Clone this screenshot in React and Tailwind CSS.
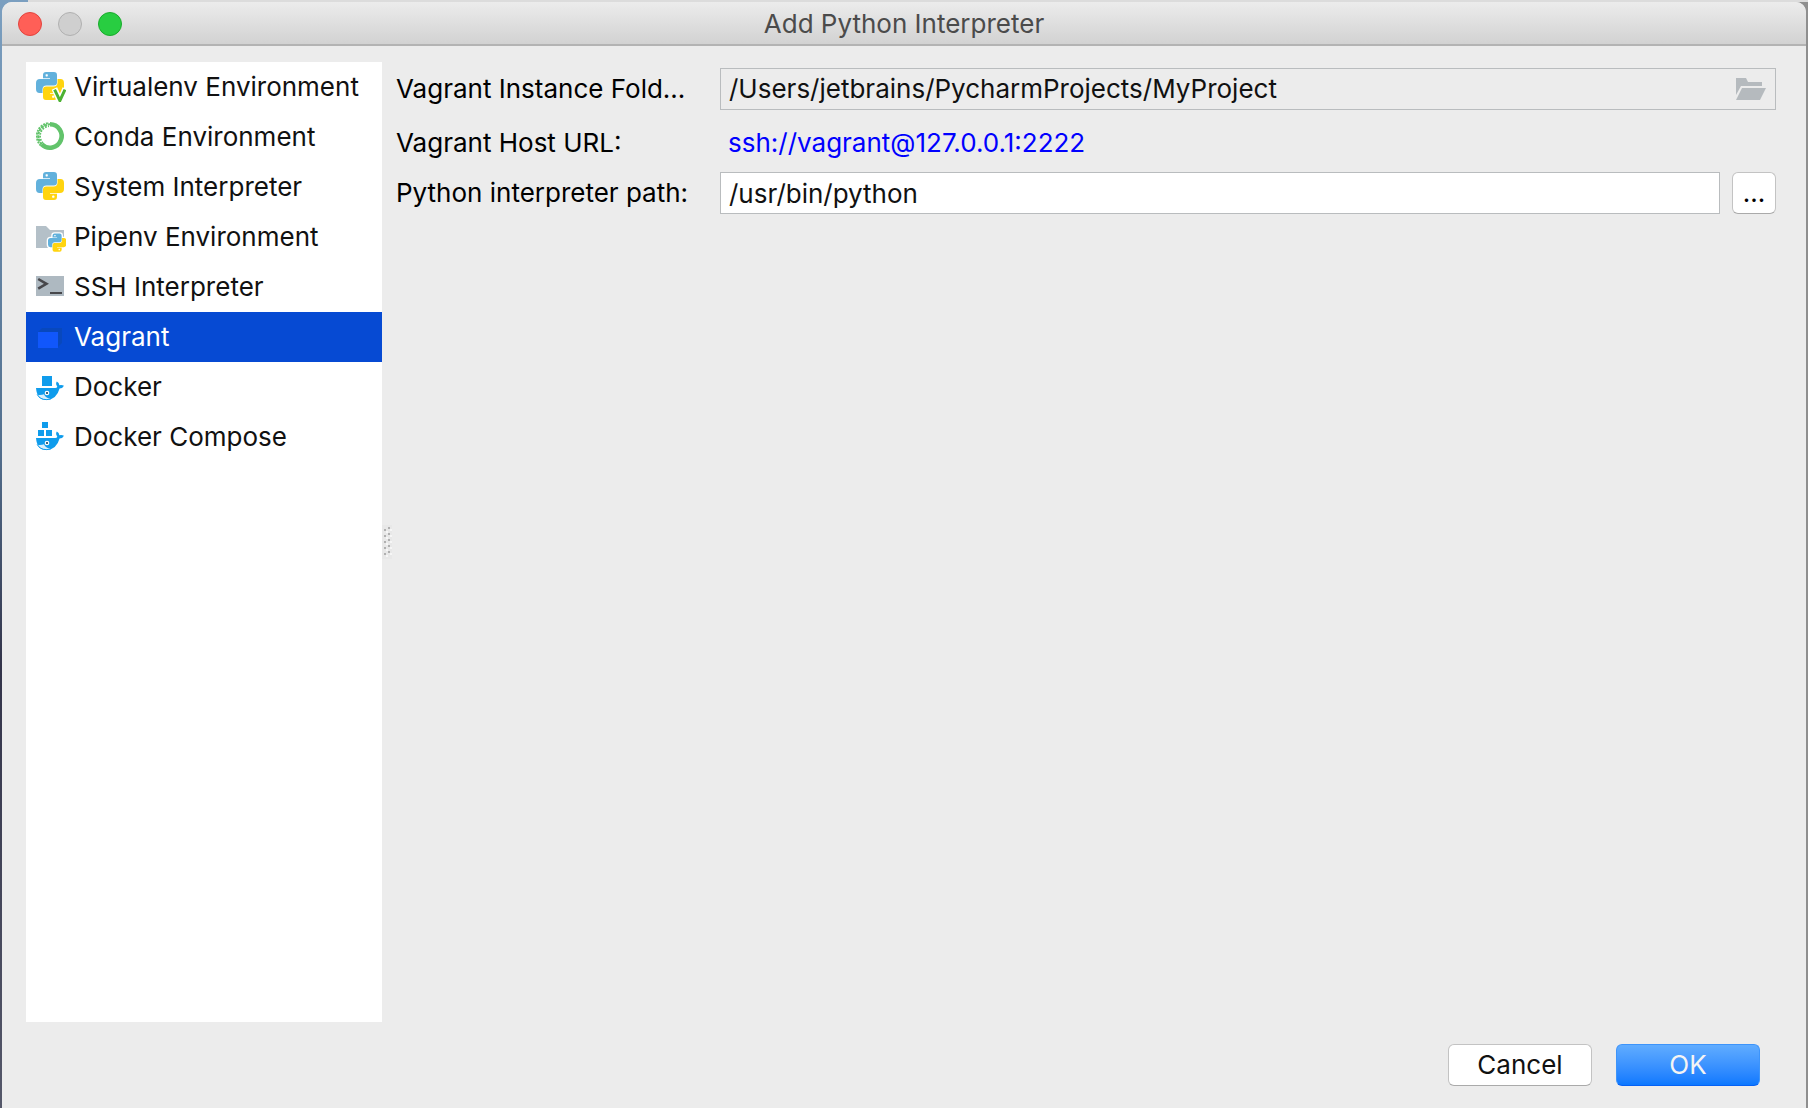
import React, { useState } from "react";

const SNAKE =
  "M10 0H18Q21 0 21 3V10.5Q21 13.5 18 13.5H10.5Q6.5 13.5 6.5 17.5V21H3.5Q0 21 0 17V11Q0 7 4 7H14V6.2H7V3Q7 0 10 0Z";

function Python({ transform }) {
  return (
    <g transform={transform}>
      <path d={SNAKE} fill="#62b1dc" />
      <rect x="9.6" y="2.2" width="2.2" height="2.2" rx="0.6" fill="#fff" />
      <g transform="rotate(180 14 14)">
        <path d={SNAKE} fill="#ffd40f" />
        <rect x="9.6" y="2.2" width="2.2" height="2.2" rx="0.6" fill="#fff" />
      </g>
    </g>
  );
}

function Icon({ children }) {
  return (
    <svg viewBox="0 0 30 30" className="size-[30px] shrink-0" aria-hidden="true">
      {children}
    </svg>
  );
}

function VirtualenvIcon() {
  return (
    <Icon>
      <Python />
      <path d="M18.4 16.5L23.9 29L29.4 16.5" fill="none" stroke="#fff" strokeWidth="6" />
      <path d="M18.6 17.6L23.9 28.6L29 17.6" fill="none" stroke="#4db233" strokeWidth="3" />
    </Icon>
  );
}

function CondaIcon() {
  return (
    <Icon>
      <path d="M14 2.3A11.7 11.7 0 1 1 5.8 22.4" fill="none" stroke="#62c36b" strokeWidth="4.6" />
      <path d="M5.8 22.4A11.7 11.7 0 0 1 14 2.3" fill="none" stroke="#62c36b" strokeWidth="2" strokeDasharray="2.8 0.8" />
      <path d="M4.8 23.6A13.2 13.2 0 0 1 13 0.9" fill="none" stroke="#62c36b" strokeWidth="1.8" strokeDasharray="2 1" />
      <path d="M7 21A9.9 9.9 0 0 1 13 4.1" fill="none" stroke="#62c36b" strokeWidth="1.8" strokeDasharray="1.8 1.2" />
    </Icon>
  );
}

function SystemIcon() {
  return (
    <Icon>
      <Python />
    </Icon>
  );
}

function PipenvIcon() {
  return (
    <Icon>
      <path d="M0 4H10L14 8H28V26H0Z" fill="#b4c0c8" />
      <g transform="translate(12 11.5) scale(.65)">
        <path d={SNAKE} fill="#fff" stroke="#fff" strokeWidth="4" />
        <path d={SNAKE} fill="#fff" stroke="#fff" strokeWidth="4" transform="rotate(180 14 14)" />
      </g>
      <Python transform="translate(12 11.5) scale(.65)" />
    </Icon>
  );
}

function SshIcon() {
  return (
    <Icon>
      <rect y="4" width="28" height="20" fill="#aeb9c1" />
      <path d="M2.2 7L10.4 11.8L2.2 16.6" fill="none" stroke="#47474b" strokeWidth="2.6" />
      <rect x="14" y="20" width="12" height="2" fill="#47474b" />
    </Icon>
  );
}

function VagrantIcon() {
  return (
    <Icon>
      <path d="M2 10L6 6H26V21L22 25Z" fill="#0848bd" />
      <rect x="2" y="10" width="20" height="16" fill="#1157fb" />
    </Icon>
  );
}

function Whale() {
  return (
    <>
      <path
        d="M0 16H19.2Q21 16 21.3 14.4Q19.2 12.4 20.8 9.6Q23.2 11 23.4 13.2Q26 12.6 28 13.8Q26.8 16.4 23.6 16.6Q20.4 28 10.4 28Q1 28 0 16Z"
        fill="#0f9cec"
      />
      <path d="M1.6 22.8Q5.2 23.4 8 22.2Q9.6 25.8 14.4 26.8Q12.6 27.6 9.6 27.4Q4.2 27 1.6 22.8Z" fill="#d9effb" />
      <path d="M1.2 22.4Q3.6 27.6 10.4 27.6Q13 27.6 15 26.8" fill="none" stroke="#0f9cec" strokeWidth="1" />
      <circle cx="11" cy="21" r="2.3" fill="#fff" />
      <circle cx="11" cy="21" r="1.1" fill="#17425c" />
    </>
  );
}

function DockerIcon() {
  return (
    <Icon>
      <rect x="6" y="4" width="10" height="10" fill="#0f9cec" />
      <Whale />
    </Icon>
  );
}

function ComposeIcon() {
  return (
    <Icon>
      <path d="M6 0h6v6H6zM2 8h6v6H2zM10 8h6v6h-6z" fill="#0f9cec" />
      <Whale />
    </Icon>
  );
}

const INTERPRETERS = [
  { name: "Virtualenv Environment", Glyph: VirtualenvIcon },
  { name: "Conda Environment", Glyph: CondaIcon },
  { name: "System Interpreter", Glyph: SystemIcon },
  { name: "Pipenv Environment", Glyph: PipenvIcon },
  { name: "SSH Interpreter", Glyph: SshIcon },
  { name: "Vagrant", Glyph: VagrantIcon },
  { name: "Docker", Glyph: DockerIcon },
  { name: "Docker Compose", Glyph: ComposeIcon },
];

const GRIP_ROWS = [0, 1, 2, 3, 4];

function Splitter() {
  return (
    <div className="flex w-[14px] shrink-0 cursor-col-resize items-center">
      <svg viewBox="0 0 10 34" className="h-[34px] w-[10px]" aria-hidden="true">
        <rect width="10" height="34" fill="#e8e8e8" />
        {GRIP_ROWS.map((row) => (
          <g key={row}>
            <rect x="2" y={4 + row * 6} width="2" height="2" fill="#b0b0b0" />
            <rect x="4" y={6 + row * 6} width="2" height="2" fill="#f6f6f6" />
            <rect x="6" y={2 + row * 6} width="2" height="2" fill="#b0b0b0" />
            <rect x="8" y={4 + row * 6} width="2" height="2" fill="#f6f6f6" />
          </g>
        ))}
      </svg>
    </div>
  );
}

export default function App() {
  const [selected, setSelected] = useState("Vagrant");
  const [path, setPath] = useState("/usr/bin/python");

  return (
    <div className="flex min-h-screen flex-col bg-[linear-gradient(to_right,#7b9fc0_28px,#dcdcdc_28px)] font-['Inter',sans-serif] text-[26px] leading-8 text-[#111]">
      <div className="mt-[2px] flex flex-1 flex-col bg-[linear-gradient(to_right,transparent_50%,#8f8f8f_50%),linear-gradient(to_bottom,#7b9fc0,#53708f_40%,#33344a_60%,#55586a)] px-[2px]">
        <main className="flex flex-1 flex-col overflow-hidden rounded-t-[10px] bg-[#ececec]">
          <header className="grid h-11 grid-cols-[1fr_auto_1fr] items-center border-b-2 border-[#b3b3b3] bg-linear-to-b from-[#ececec] to-[#d2d2d2] px-4 pt-[2px]">
            <div className="flex gap-4">
              <button aria-label="Close" className="size-6 rounded-full border border-[#e2443e] bg-[#ff5f57]" />
              <button aria-label="Minimize" disabled className="size-6 rounded-full border border-[#b0b0b0] bg-[#cfcfcf]" />
              <button aria-label="Zoom" className="size-6 rounded-full border border-[#1aab2c] bg-[#28cd41]" />
            </div>
            <h1 className="text-[#4b4b4b]">Add Python Interpreter</h1>
          </header>

          <div className="flex flex-1 pt-4 pr-[30px] pl-6">
            <ul className="w-[356px] shrink-0 bg-white">
              {INTERPRETERS.map(({ name, Glyph }) => (
                <li key={name}>
                  <button
                    onClick={() => setSelected(name)}
                    className={
                      name === selected
                        ? "flex h-[50px] w-full items-center gap-2 bg-[#064ad3] pl-[10px] text-left whitespace-nowrap text-white"
                        : "flex h-[50px] w-full items-center gap-2 pl-[10px] text-left whitespace-nowrap"
                    }
                  >
                    <Glyph />
                    {name}
                  </button>
                </li>
              ))}
            </ul>

            <Splitter />

            <form className="grid flex-1 grid-cols-[324px_1fr] content-start items-center pt-[6px] text-black">
              <label htmlFor="folder">Vagrant Instance Fold...</label>
              <div className="flex h-[42px] items-center border border-[#b9bcbe] pr-[9px] pl-2">
                <input
                  id="folder"
                  readOnly
                  value="/Users/jetbrains/PycharmProjects/MyProject"
                  className="min-w-0 flex-1 bg-transparent text-[#111] outline-none"
                />
                <button type="button" aria-label="Browse folder">
                  <svg viewBox="0 0 30 22" className="block h-[22px] w-[30px]" aria-hidden="true">
                    <path d="M0 0H10L12 4H26V8H5L0 17Z" fill="#b5babe" />
                    <path d="M6 10H30L24 22H0Z" fill="#b5babe" />
                  </svg>
                </button>
              </div>

              <span className="flex h-[62px] items-center pt-1">Vagrant Host URL:</span>
              <a href="ssh://vagrant@127.0.0.1:2222" className="flex h-[62px] items-center pt-1 pl-2 text-[#0000ff]">
                ssh://vagrant@127.0.0.1:2222
              </a>

              <label htmlFor="path">Python interpreter path:</label>
              <div className="flex gap-3">
                <input
                  id="path"
                  value={path}
                  onChange={(e) => setPath(e.target.value)}
                  className="h-[42px] min-w-0 flex-1 border border-[#b9bcbe] bg-white px-2 text-[#111] outline-none"
                />
                <button
                  type="button"
                  aria-label="Browse interpreter"
                  className="h-[42px] w-11 rounded-md border border-[#c3c3c3] border-b-[#aaa] bg-white"
                >
                  ...
                </button>
              </div>
            </form>
          </div>

          <footer className="flex justify-end gap-6 py-[22px] pr-[46px]">
            <button className="h-[42px] w-36 rounded-md border border-[#c3c3c3] border-b-[#aaa] bg-white">Cancel</button>
            <button className="h-[42px] w-36 rounded-md border border-[#3d94fa] border-b-[#0561f5] bg-linear-to-b from-[#60acff] to-[#0a78ff] text-[#f4f4f4]">
              OK
            </button>
          </footer>
        </main>
      </div>
    </div>
  );
}
